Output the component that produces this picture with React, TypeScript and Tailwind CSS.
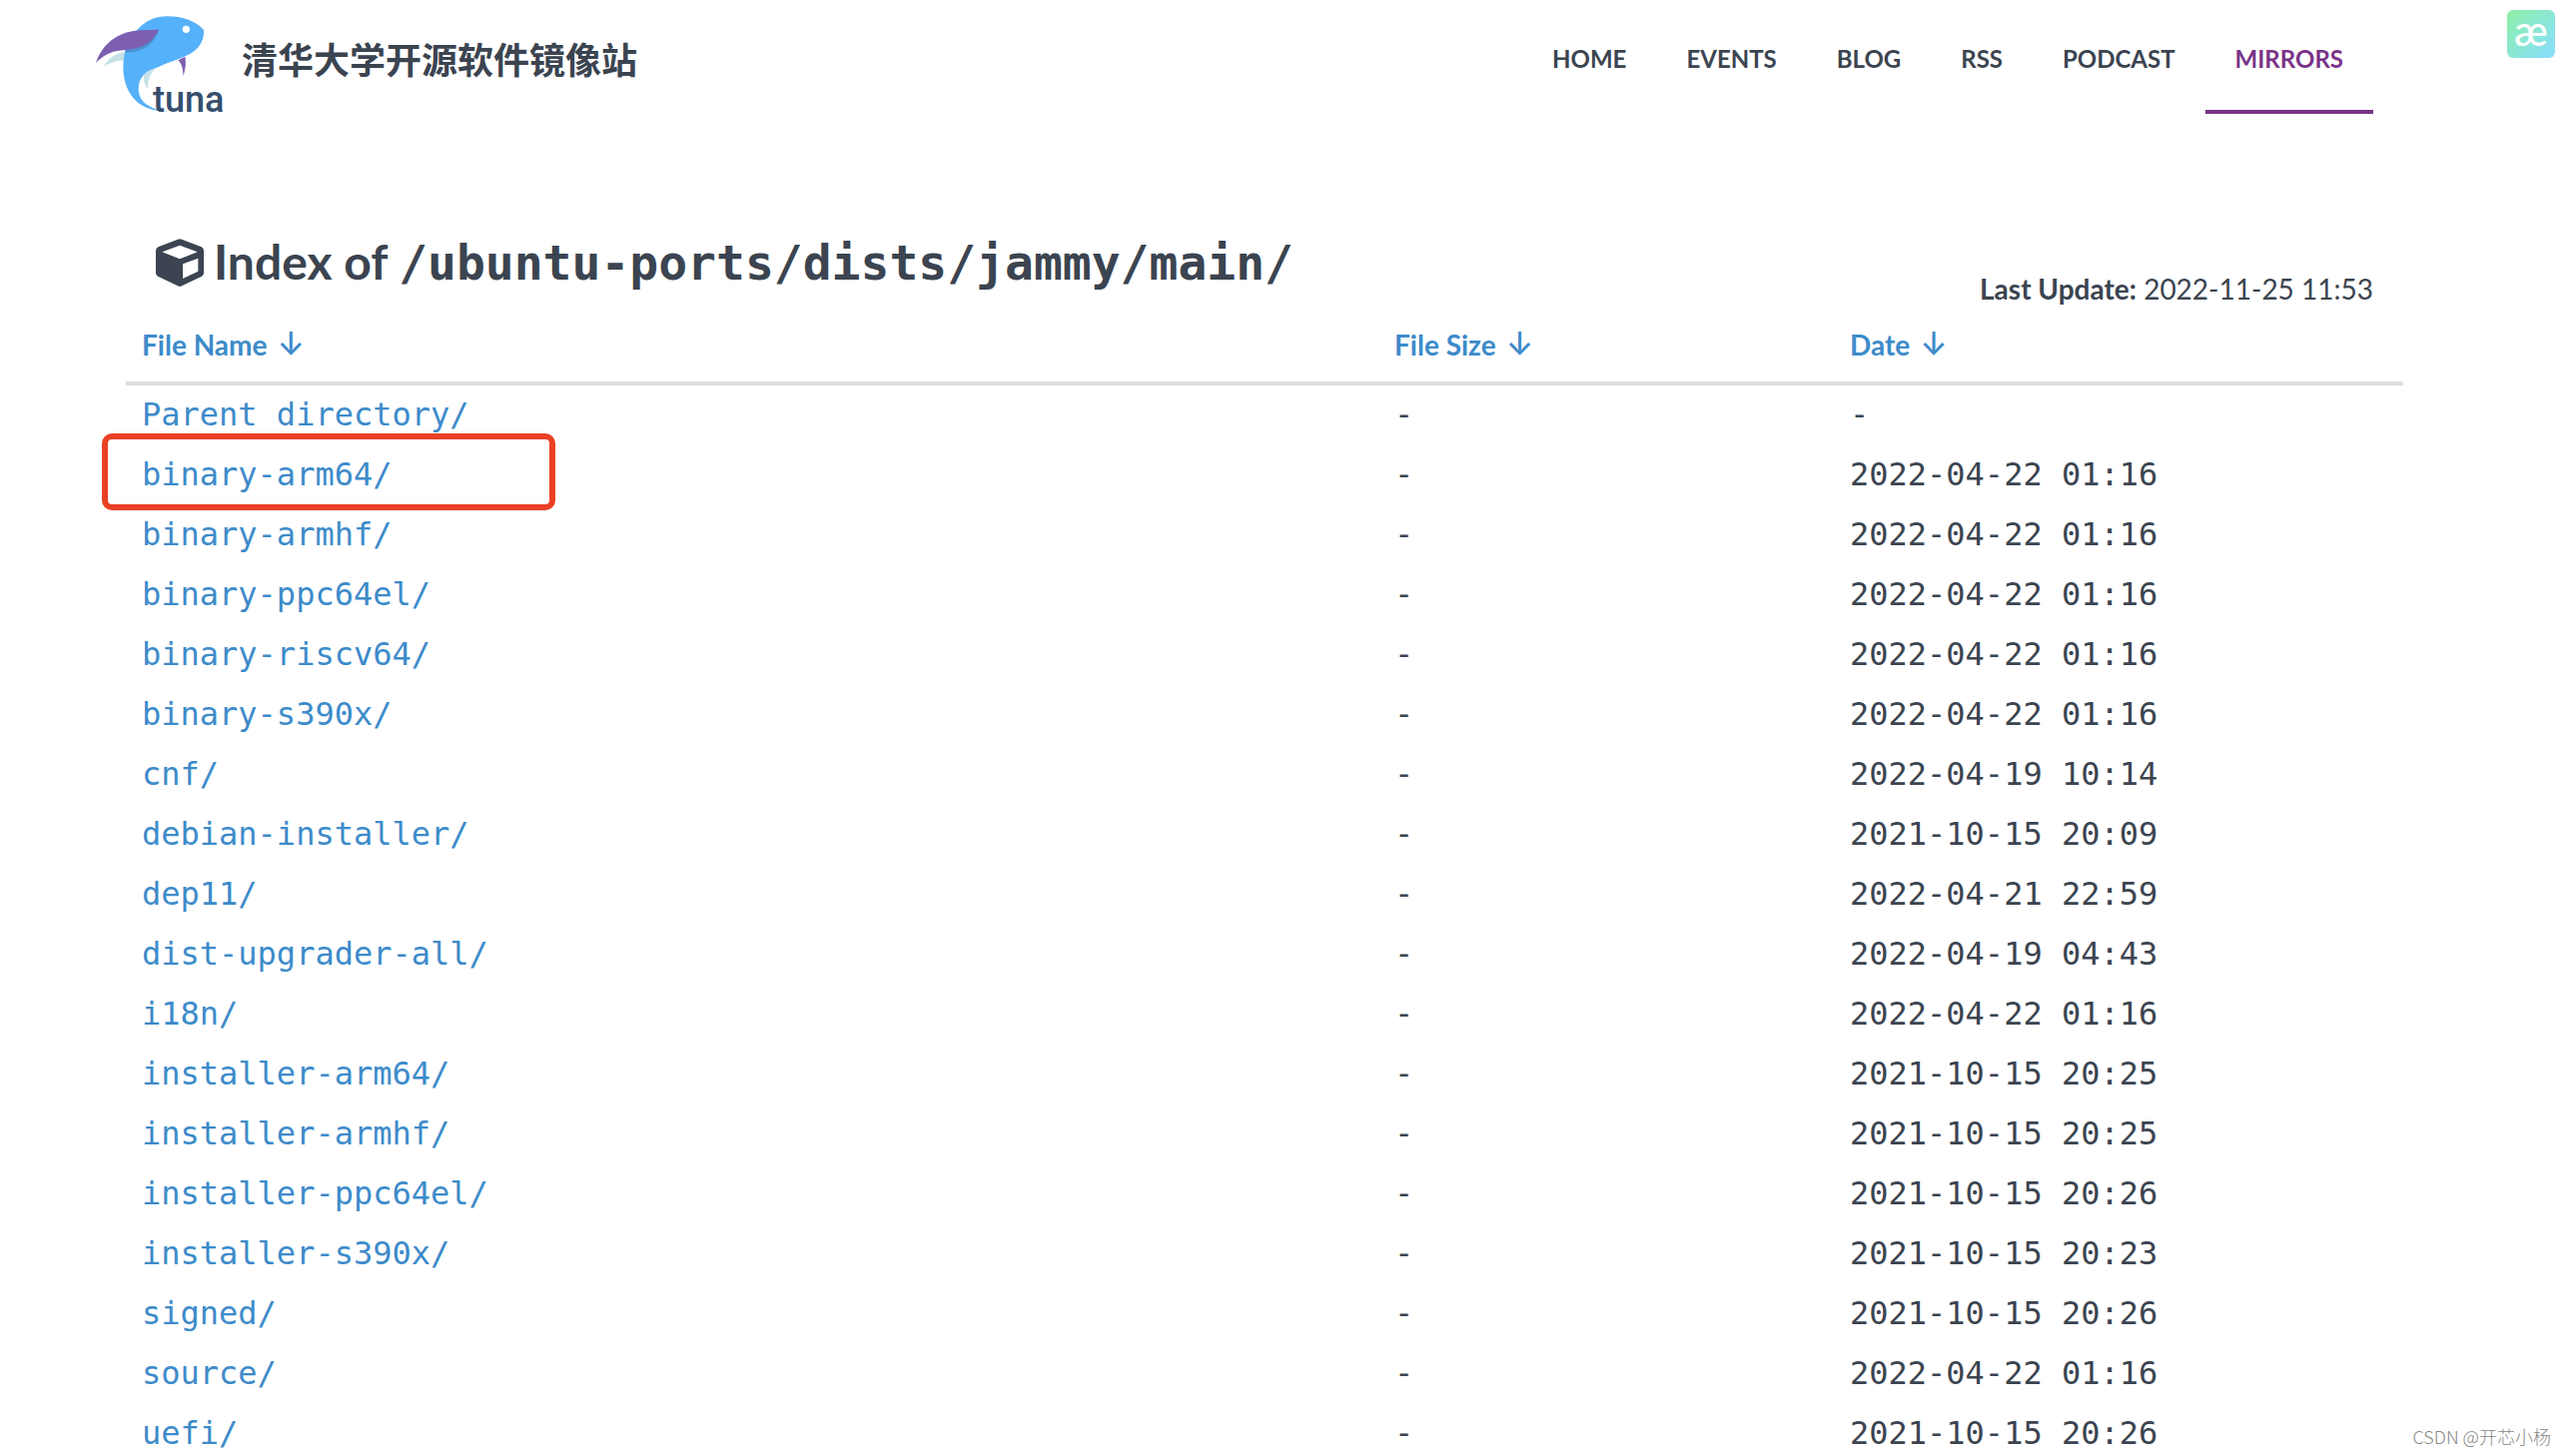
const navItems = ['HOME', 'EVENTS', 'BLOG', 'RSS', 'PODCAST', 'MIRRORS'];

const columns = [
  { label: 'File Name', width: 'w-[55%]' },
  { label: 'File Size', width: 'w-[20%]' },
  { label: 'Date', width: 'w-[25%]' },
];

const files = [
  { name: 'Parent directory/', date: '-' },
  { name: 'binary-arm64/', date: '2022-04-22 01:16', marked: true },
  { name: 'binary-armhf/', date: '2022-04-22 01:16' },
  { name: 'binary-ppc64el/', date: '2022-04-22 01:16' },
  { name: 'binary-riscv64/', date: '2022-04-22 01:16' },
  { name: 'binary-s390x/', date: '2022-04-22 01:16' },
  { name: 'cnf/', date: '2022-04-19 10:14' },
  { name: 'debian-installer/', date: '2021-10-15 20:09' },
  { name: 'dep11/', date: '2022-04-21 22:59' },
  { name: 'dist-upgrader-all/', date: '2022-04-19 04:43' },
  { name: 'i18n/', date: '2022-04-22 01:16' },
  { name: 'installer-arm64/', date: '2021-10-15 20:25' },
  { name: 'installer-armhf/', date: '2021-10-15 20:25' },
  { name: 'installer-ppc64el/', date: '2021-10-15 20:26' },
  { name: 'installer-s390x/', date: '2021-10-15 20:23' },
  { name: 'signed/', date: '2021-10-15 20:26' },
  { name: 'source/', date: '2022-04-22 01:16' },
  { name: 'uefi/', date: '2021-10-15 20:26' },
];

function TunaLogo() {
  return (
    <svg viewBox="36 -18 396 342" className="h-[114px] w-[132px] shrink-0 overflow-visible" role="img" aria-label="tuna">
      <path fill="#c5e1e7" d="M60 182C72 156 94 143 124 138L121 163C98 164 78 171 60 182Z" />
      <path
        fill="#55b1fa"
        d="M360 72C336 45 298 31 250 31C212 31 182 46 158 74C132 104 119 138 118 182C118 252 154 317 252 317C196 309 164 288 164 248C164 218 181 198 217 186C258 168 292 158 317 145C348 128 362 102 360 72Z"
      />
      <path fill="#4a93cf" d="M123 139C164 141 207 126 225 71L180 84L125 130Z" />
      <path fill="#7d5fb2" d="M36 171C58 106 112 75 170 73L225 71C207 108 174 130 124 132C88 134 60 145 36 171Z" />
      <path fill="#c5e1e7" d="M180 206C188 197 200 190 217 186C198 203 190 225 193 251C183 240 179 224 180 206Z" />
      <path fill="#7d5fb2" d="M283 163L304 152C308 176 303 196 299 210C297 188 295 174 283 163Z" />
      <circle cx="307" cy="70" r="11" fill="#fff" />
      <text x="207" y="317" fill="#354e6e" className="font-['Roboto',sans-serif] text-[108px] font-medium">
        tuna
      </text>
    </svg>
  );
}

function CubeIcon() {
  return (
    <svg viewBox="18 31 144 144" className="size-12 shrink-0" fill="currentColor" aria-hidden="true">
      <path
        fillRule="evenodd"
        d="M84 33Q90 31 96 33L155 56Q162 59 162 67V134Q162 141 156 144L96 173Q90 176 84 173L24 144Q18 141 18 134V67Q18 59 25 56ZM90 51L37 71L90 92L143 71ZM99 107V151L145 129V90Z"
      />
    </svg>
  );
}

function Header() {
  return (
    <header className="flex items-start justify-between pr-[60px]">
      <a href="#" className="flex items-start">
        <TunaLogo />
        <span className="ml-[14px] mt-8 whitespace-nowrap font-['Noto_Sans_CJK_SC',sans-serif] text-[36px] font-bold leading-[52px]">
          清华大学开源软件镜像站
        </span>
      </a>
      <nav className="flex">
        {navItems.map((item) => (
          <a
            key={item}
            href="#"
            className={
              item === 'MIRRORS'
                ? 'border-b-4 border-[#7a3388] px-[30px] pb-[31px] pt-[39px] text-2xl font-bold leading-10 text-[#7a3388]'
                : 'px-[30px] pt-[39px] text-2xl font-bold leading-10'
            }
          >
            {item}
          </a>
        ))}
      </nav>
    </header>
  );
}

export default function App() {
  return (
    <div className="relative h-screen overflow-hidden bg-white pr-9 font-['Lato',sans-serif] text-[#3b4450]">
      <div className="mx-auto max-w-[2340px]">
        <Header />

        <main className="px-[30px]">
          <div className="flex items-end justify-between px-[30px] pt-[124px]">
            <h1 className="flex items-center gap-[10px] pb-[22px] text-5xl font-bold">
              <CubeIcon />
              <span>
                Index of <span className="font-['DejaVu_Sans_Mono',monospace]">/ubuntu-ports/dists/jammy/main/</span>
              </span>
            </h1>
            <p className="text-[28px] leading-10">
              <strong>Last Update:</strong> 2022-11-25 11:53
            </p>
          </div>

          <table className="w-full table-fixed">
            <thead>
              <tr className="border-b-4 border-[#ddd]">
                {columns.map((column) => (
                  <th key={column.label} className={`${column.width} px-4 pb-[17px] pt-4 text-left text-[28px] font-bold leading-10 text-[#3d8bca]`}>
                    <a href="#">{column.label}</a>
                    <a href="#" className="ml-[10px] font-['Inter',sans-serif] text-[32px] font-medium leading-none">
                      ↓
                    </a>
                  </th>
                ))}
              </tr>
            </thead>
            <tbody className="font-['DejaVu_Sans_Mono',monospace] text-[32px] leading-10">
              {files.map((file) => (
                <tr key={file.name}>
                  <td className="relative px-4 pb-[11px] pt-[9px] text-[#3d8bca]">
                    <a href="#">{file.name}</a>
                    {file.marked && (
                      <span className="absolute -left-6 -top-3 h-[77px] w-[454px] rounded-[10px] border-6 border-[#ea4025]" />
                    )}
                  </td>
                  <td className="px-4 pb-[11px] pt-[9px]">-</td>
                  <td className="px-4 pb-[11px] pt-[9px]">{file.date}</td>
                </tr>
              ))}
            </tbody>
          </table>
        </main>
      </div>

      <button className="absolute right-[10px] top-[10px] flex size-12 items-center justify-center rounded-md bg-linear-to-br from-[#8ff0a4] to-[#8adcff] pb-2 text-[42px] font-medium leading-none text-white">
        æ
      </button>
      <p className="absolute bottom-[6px] right-[14px] font-['Noto_Sans_CJK_SC',sans-serif] text-lg font-light text-[#888]">
        CSDN @开芯小杨
      </p>
    </div>
  );
}
